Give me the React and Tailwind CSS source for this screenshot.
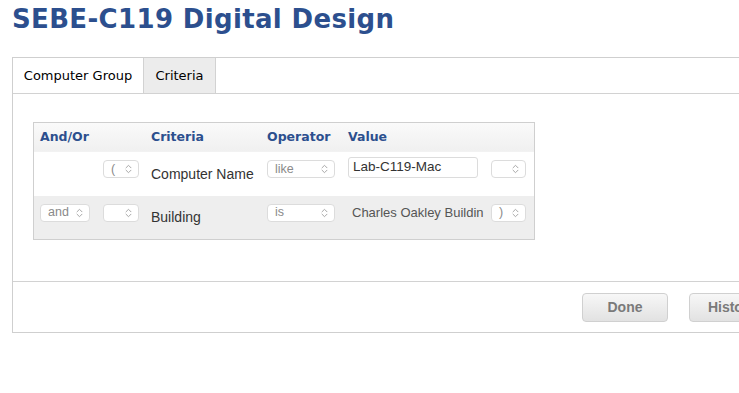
import React from 'react';

function Chevrons() {
  return (
    <svg width="7" height="10" viewBox="0 0 7 10" fill="none" stroke="#a8a8a8" strokeWidth="1" strokeLinecap="round" strokeLinejoin="round">
      <path d="M1 3.8 L3.5 1.3 L6 3.8" />
      <path d="M1 6.2 L3.5 8.7 L6 6.2" />
    </svg>
  );
}

function Select({ value, width }) {
  return (
    <div
      className={`flex items-center justify-between h-[18px] ${width} mb-[10px] rounded-[4px] border border-[#dcdcdc] bg-white pl-[7px] pr-[6px] text-[12.5px] text-[#8a8a8a]`}
    >
      <span className="leading-none">{value}</span>
      <Chevrons />
    </div>
  );
}

export default function App() {
  const font = { fontFamily: '"DejaVu Sans", Verdana, sans-serif' };
  const body = { fontFamily: '"Liberation Sans", Arial, sans-serif' };

  return (
    <div className="w-[739px] h-[393px] overflow-hidden bg-white">
      <div className="h-[57px] pl-[12px] pt-[1px]">
        <h1 className="text-[26px] leading-[36px] font-bold text-[#2c4f8e] tracking-[0.35px]" style={font}>
          SEBE-C119 Digital Design
        </h1>
      </div>

      <div className="ml-[12px] w-[790px] border border-[#cfcfcf]">
        <div className="flex h-[36px] border-b border-[#d2d2d2]">
          <div className="w-[130px] flex items-center justify-center bg-white text-[13px] text-black" style={font}>
            Computer Group
          </div>
          <div className="w-[73px] flex items-center justify-center bg-[#ececec] border-l border-r border-[#d2d2d2] text-[13px] text-black" style={font}>
            Criteria
          </div>
        </div>

        <div className="h-[187px] pl-[20px] pt-[28px]">
          <div className="w-[502px] border border-[#cfcfcf]">
            <div
              className="grid grid-cols-[69px_48px_116px_81px_143px_43px] h-[28px] items-center bg-gradient-to-b from-[#fafafa] to-[#f0f0f0] text-[12.5px] font-bold text-[#2c4f8e]"
              style={font}
            >
              <div className="col-span-2 pl-[6px]">And/Or</div>
              <div>Criteria</div>
              <div>Operator</div>
              <div>Value</div>
              <div></div>
            </div>

            <div className="grid grid-cols-[69px_48px_116px_81px_143px_43px] h-[45px] items-center bg-white border-t border-[#f2f2f2]" style={body}>
              <div></div>
              <Select value="(" width="w-[36px]" />
              <div className="text-[14px] text-[#333]">Computer Name</div>
              <Select value="like" width="w-[68px]" />
              <div className="w-[130px] h-[21px] mb-[13px] flex items-center rounded-[3px] border border-[#dcdcdc] bg-white pl-[4px] text-[13.5px] text-[#333]">
                Lab-C119-Mac
              </div>
              <Select value="" width="w-[35px]" />
            </div>

            <div className="grid grid-cols-[69px_48px_116px_81px_143px_43px] h-[43px] items-center bg-[#eeeeee]" style={body}>
              <div className="pl-[6px]">
                <Select value="and" width="w-[50px]" />
              </div>
              <Select value="" width="w-[36px]" />
              <div className="text-[14px] text-[#333]">Building</div>
              <Select value="is" width="w-[68px]" />
              <div className="w-[130px] mb-[10px] whitespace-nowrap pl-[4px] text-[13px] text-[#555]">
                Charles Oakley Buildin
              </div>
              <Select value=")" width="w-[35px]" />
            </div>
          </div>
        </div>

        <div className="h-[51px] border-t border-[#d2d2d2] flex items-start justify-end gap-[21px] pr-[26px] pt-[11px]" style={body}>
          <button className="w-[86px] h-[29px] rounded-[4px] border border-[#d0d0d0] bg-gradient-to-b from-[#f7f7f7] to-[#e2e2e2] text-[14px] font-bold text-[#7a7a7a]">
            Done
          </button>
          <button className="w-[86px] h-[29px] rounded-[4px] border border-[#d0d0d0] bg-gradient-to-b from-[#f7f7f7] to-[#e2e2e2] text-[14px] font-bold text-[#7a7a7a]">
            History
          </button>
        </div>
      </div>
    </div>
  );
}
